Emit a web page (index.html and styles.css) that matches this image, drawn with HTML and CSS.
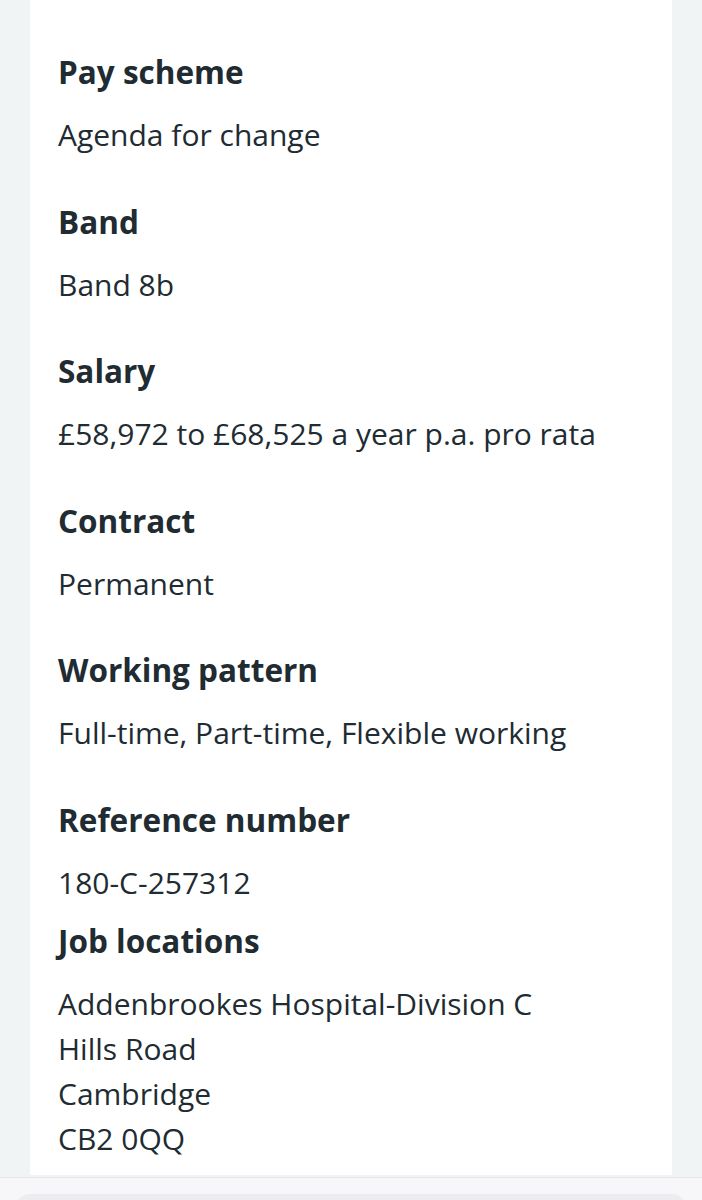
FILE: index.html
```html
<!DOCTYPE html>
<html lang="en">
<head>
<meta charset="utf-8">
<title>Job details</title>
<link rel="stylesheet" href="styles.css">
</head>
<body>
<main class="page">
  <section class="card">
    <dl class="details">
      <dt class="label">Pay scheme</dt>
      <dd class="value">Agenda for change</dd>
      <dt class="label">Band</dt>
      <dd class="value">Band 8b</dd>
      <dt class="label">Salary</dt>
      <dd class="value">£58,972 to £68,525 a year p.a. pro rata</dd>
      <dt class="label">Contract</dt>
      <dd class="value">Permanent</dd>
      <dt class="label">Working pattern</dt>
      <dd class="value">Full-time, Part-time, Flexible working</dd>
      <dt class="label">Reference number</dt>
      <dd class="value value-tight">180-C-257312</dd>
      <dt class="label">Job locations</dt>
      <dd class="value value-last">
        <span class="line">Addenbrookes Hospital-Division C</span>
        <span class="line">Hills Road</span>
        <span class="line">Cambridge</span>
        <span class="line">CB2 0QQ</span>
      </dd>
    </dl>
  </section>
</main>
<div class="toolbar"><div class="toolbar-field"></div></div>
</body>
</html>
```
FILE: styles.css
```css
html, body {
  margin: 0;
  padding: 0;
}
body {
  background: #f0f4f5;
  font-family: "Open Sans", "Noto Sans", "Liberation Sans", sans-serif;
  color: #212b32;
  height: 1200px;
  overflow: hidden;
}
.page {
  padding: 0 30px;
}
.card {
  background: #ffffff;
  padding: 52px 28px 14px 28px;
}
.details {
  margin: 0;
}
.label {
  font-size: 31.5px;
  font-weight: 700;
  line-height: 40px;
  margin: 0 0 20px 0;
}
.value {
  margin: 0 0 44.6px 0;
  font-size: 30px;
  line-height: 45px;
}
.value-tight {
  margin-bottom: 16px;
}
.value-last {
  margin-bottom: 0;
}
.line {
  display: block;
}
.toolbar {
  position: fixed;
  left: 0;
  right: 0;
  bottom: 0;
  height: 23px;
  background: #f7f7f9;
  border-top: 1px solid #e6e6ea;
  padding: 16px 17px 0 17px;
  box-sizing: border-box;
}
.toolbar-field {
  height: 30px;
  background: #ededf1;
  border-radius: 12px;
}
```
